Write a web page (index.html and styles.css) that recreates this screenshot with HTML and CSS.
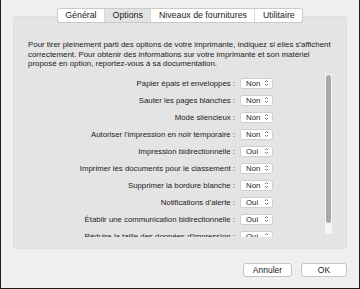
FILE: index.html
```html
<!DOCTYPE html>
<html lang="fr">
<head>
    <meta charset="UTF-8">
    <title>Options</title>
    <link rel="stylesheet" href="styles.css">
</head>
<body>
    <div class="window">
        <div class="tabs">
            <span class="tab">Général</span>
            <span class="tab selected">Options</span>
            <span class="tab">Niveaux de fournitures</span>
            <span class="tab">Utilitaire</span>
        </div>
        <div class="panel">
            <p class="intro">Pour tirer pleinement parti des options de votre imprimante, indiquez si elles s'affichent correctement. Pour obtenir des informations sur votre imprimante et son matériel proposé en option, reportez-vous à sa documentation.</p>
            <div class="scroll">
                <div class="rows">
                    <div class="row"><span class="label">Papier épais et enveloppes :</span><span class="popup">Non<svg viewBox="0 0 5 8"><path d="M1 3 2.5 1.5 4 3M1 5 2.5 6.5 4 5"/></svg></span></div>
                    <div class="row"><span class="label">Sauter les pages blanches :</span><span class="popup">Non<svg viewBox="0 0 5 8"><path d="M1 3 2.5 1.5 4 3M1 5 2.5 6.5 4 5"/></svg></span></div>
                    <div class="row"><span class="label">Mode silencieux :</span><span class="popup">Non<svg viewBox="0 0 5 8"><path d="M1 3 2.5 1.5 4 3M1 5 2.5 6.5 4 5"/></svg></span></div>
                    <div class="row"><span class="label">Autoriser l'impression en noir temporaire :</span><span class="popup">Non<svg viewBox="0 0 5 8"><path d="M1 3 2.5 1.5 4 3M1 5 2.5 6.5 4 5"/></svg></span></div>
                    <div class="row"><span class="label">Impression bidirectionnelle :</span><span class="popup">Oui<svg viewBox="0 0 5 8"><path d="M1 3 2.5 1.5 4 3M1 5 2.5 6.5 4 5"/></svg></span></div>
                    <div class="row"><span class="label">Imprimer les documents pour le classement :</span><span class="popup">Non<svg viewBox="0 0 5 8"><path d="M1 3 2.5 1.5 4 3M1 5 2.5 6.5 4 5"/></svg></span></div>
                    <div class="row"><span class="label">Supprimer la bordure blanche :</span><span class="popup">Non<svg viewBox="0 0 5 8"><path d="M1 3 2.5 1.5 4 3M1 5 2.5 6.5 4 5"/></svg></span></div>
                    <div class="row"><span class="label">Notifications d'alerte :</span><span class="popup">Oui<svg viewBox="0 0 5 8"><path d="M1 3 2.5 1.5 4 3M1 5 2.5 6.5 4 5"/></svg></span></div>
                    <div class="row"><span class="label">Établir une communication bidirectionnelle :</span><span class="popup">Oui<svg viewBox="0 0 5 8"><path d="M1 3 2.5 1.5 4 3M1 5 2.5 6.5 4 5"/></svg></span></div>
                    <div class="row"><span class="label">Réduire la taille des données d'impression :</span><span class="popup">Oui<svg viewBox="0 0 5 8"><path d="M1 3 2.5 1.5 4 3M1 5 2.5 6.5 4 5"/></svg></span></div>
                </div>
                <div class="scrollbar"><div class="thumb"></div></div>
            </div>
        </div>
        <div class="buttons">
            <button class="button">Annuler</button>
            <button class="button">OK</button>
        </div>
    </div>
</body>
</html>
```

FILE: styles.css
```css
body {
    margin: 0;
    font-family: "Liberation Sans", Arial, sans-serif;
    color: #222;
}

.window {
    width: 360px;
    height: 289px;
    box-sizing: border-box;
    background-color: #efefef;
    border: 1px solid #1e1e1e;
    border-top: none;
    padding: 8px 12px 0;
}

.tabs {
    display: flex;
    width: fit-content;
    margin: 0 auto;
    height: 13px;
    background-color: #fff;
    border: 1px solid #c9c9c9;
    border-radius: 3px;
    position: relative;
    z-index: 1;
    overflow: hidden;
}

.tab {
    font-size: 8.8px;
    line-height: 13px;
    padding: 0 7.5px;
    border-left: 1px solid #d9d9d9;
}

.tab:first-child {
    border-left: none;
}

.tab.selected {
    background-color: #e3e3e3;
}

.panel {
    margin-top: -7px;
    height: 233px;
    box-sizing: border-box;
    background-color: #e4e4e4;
    border: 1px solid #dedede;
    border-radius: 4px;
    padding: 23px 0 0 14px;
}

.intro {
    margin: 0;
    font-size: 7.9px;
    line-height: 9.5px;
    width: 308px;
}

.scroll {
    display: flex;
    height: 164px;
    margin-top: 4px;
    overflow: hidden;
}

.rows {
    width: 245px;
    padding-top: 2px;
}

.row {
    display: grid;
    grid-template-columns: 1fr 33px;
    column-gap: 5px;
    align-items: center;
    height: 17px;
}

.label {
    text-align: right;
    font-size: 7.8px;
    white-space: nowrap;
}

.popup {
    display: flex;
    align-items: center;
    justify-content: space-between;
    height: 11px;
    box-sizing: border-box;
    padding: 0 3px 0 5px;
    background-color: #fff;
    border: 1px solid #cfcfcf;
    border-radius: 2.5px;
    font-size: 7.8px;
}

.popup svg {
    width: 5px;
    height: 8px;
    fill: none;
    stroke: #555;
    stroke-width: 0.8;
}

.scrollbar {
    margin-left: 51px;
    width: 9px;
    height: 162px;
    box-sizing: border-box;
    background-color: #f6f6f6;
    border: 1px solid #e2e2e2;
    padding: 1px 1px;
}

.thumb {
    height: 148px;
    width: 5px;
    border-radius: 3px;
    background-color: #a9a9a9;
}

.buttons {
    display: flex;
    justify-content: flex-end;
    gap: 9px;
    margin-top: 14px;
}

.button {
    font-family: "Liberation Sans", Arial, sans-serif;
    font-size: 8.5px;
    color: #222;
    height: 14px;
    padding: 0;
    background-color: #fff;
    border: 1px solid #c4c4c4;
    border-radius: 3px;
    width: 49px;
}

.button:last-child {
    width: 46px;
}
```
